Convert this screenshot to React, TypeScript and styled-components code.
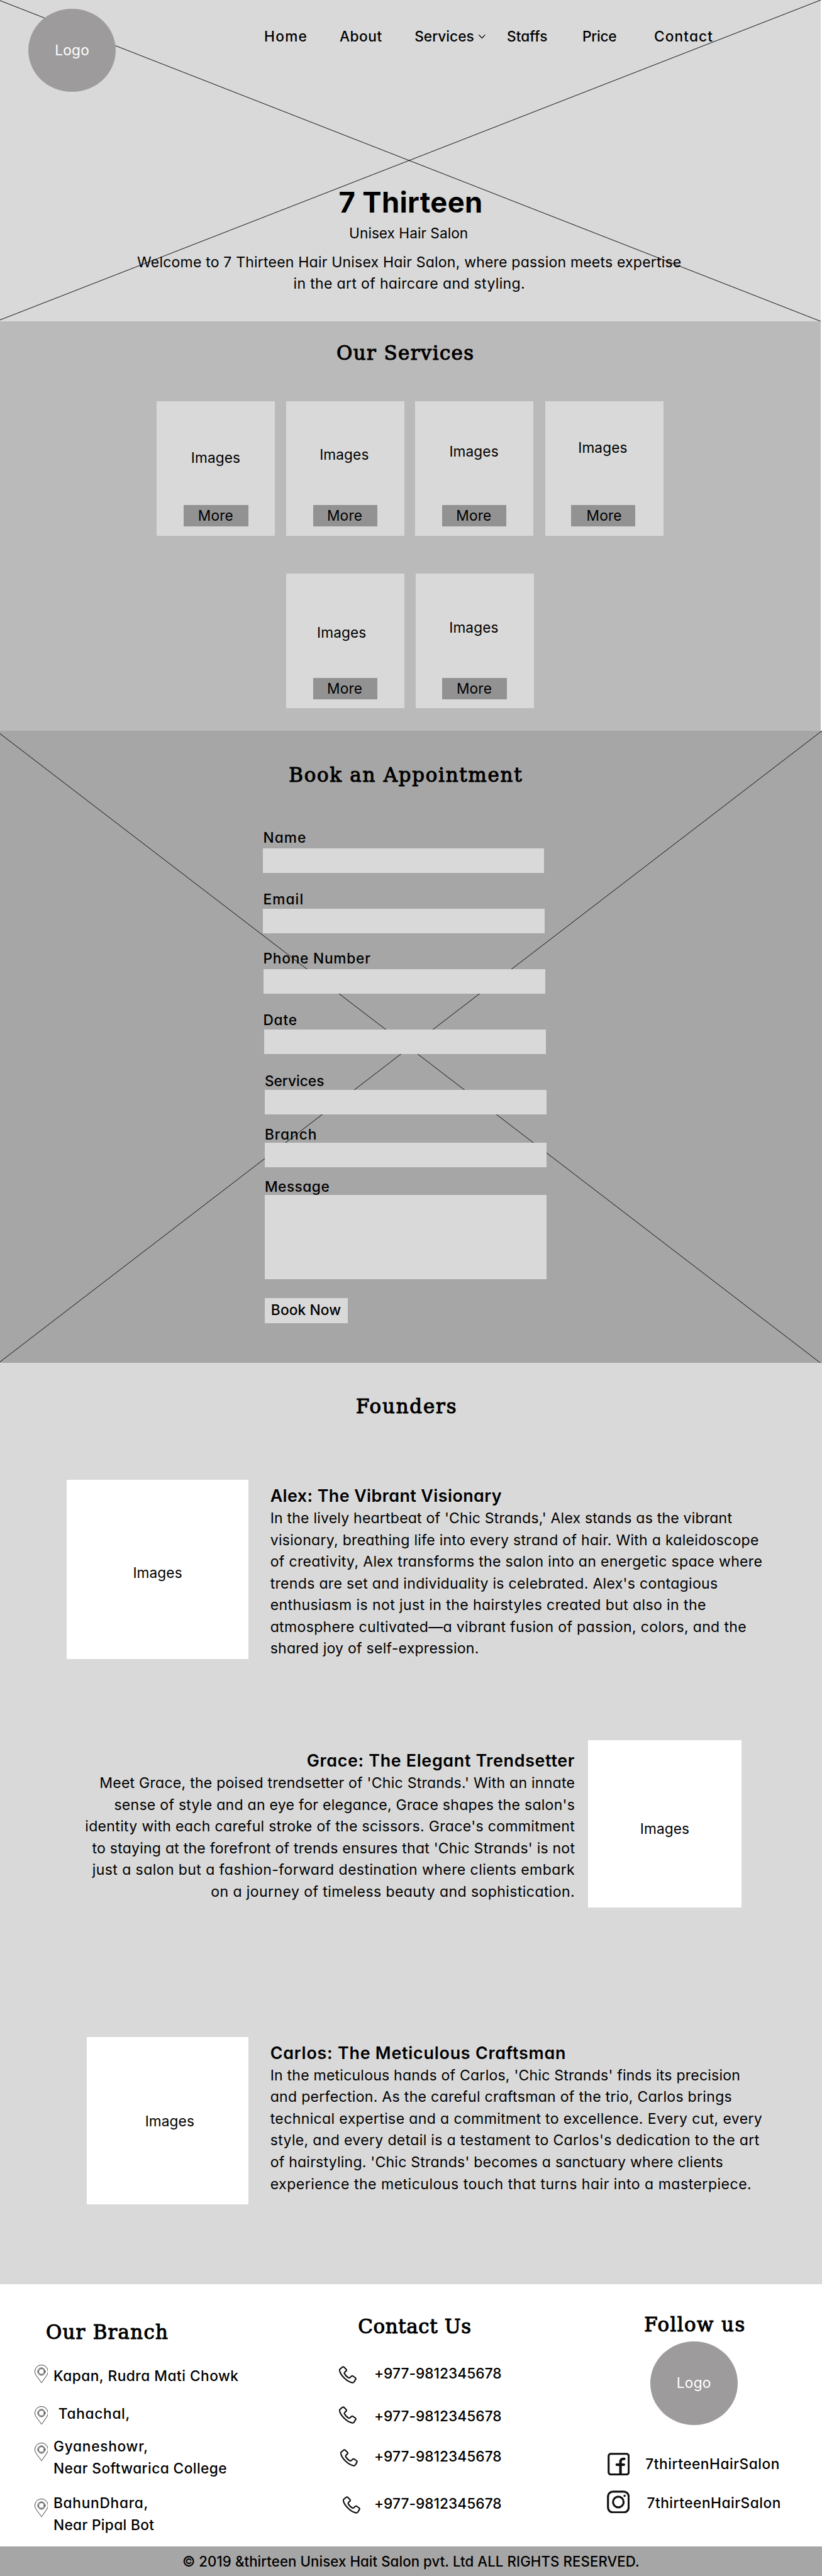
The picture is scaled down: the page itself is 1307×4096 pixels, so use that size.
import React from 'react';
import styled, { createGlobalStyle, css } from 'styled-components';

/* Sizes are written in the units of the 1440-wide design and scaled to the page width. */
const SCALE = 1307 / 1440;
const u = (n: number) => `${+(n * SCALE).toFixed(3)}px`;

const ink = '#000';
const panel = '#d9d9d9';

const GlobalStyle = createGlobalStyle`
  *, *::before, *::after { box-sizing: border-box; }
  html { background: #fff; }
  body { margin: 0; background: #fff; color: ${ink}; font-family: Inter, sans-serif; overflow-x: hidden; }
  h1, h2, h3, p { margin: 0; padding: 0; }
`;

const Page = styled.div`
  display: flex;
  flex-direction: column;
  width: ${u(1440)};
  height: 4096px;
  overflow: hidden;
`;

/* ---------- type ---------- */

const geometric = css`
  font-family: Inter, sans-serif;
  font-feature-settings: 'cv11';
  font-size: ${u(25)};
  line-height: ${u(38.05)};
  white-space: nowrap;
`;

const body = css`
  ${geometric};
  font-size: ${u(25.4)};
`;

const plain = css`
  font-family: Inter, sans-serif;
  font-size: ${u(25)};
  font-weight: 400;
  white-space: nowrap;
`;

const Line = styled.span<{ $track: number }>`
  display: block;
  letter-spacing: ${p => u(p.$track)};
`;

const Heading = styled.h2<{ $indent: number; $top: number; $track: number }>`
  height: ${u(44)};
  margin: ${p => u(p.$top)} 0 0 ${p => u(p.$indent)};
  font-family: 'DejaVu Serif', serif;
  font-weight: 400;
  font-size: ${u(34)};
  line-height: ${u(46)};
  letter-spacing: ${p => u(p.$track)};
  white-space: nowrap;
  -webkit-text-stroke: ${u(1.2)} ${ink};
`;

const ImageLabel = styled.span`
  ${plain};
  line-height: ${u(30)};
  letter-spacing: ${u(0.09)};
`;

/* ---------- crossed background ---------- */

const Cross = styled.svg`
  position: absolute;
  inset: 0;
  width: 100%;
  height: 100%;
  stroke: #111;
  stroke-width: 1.1;
  fill: none;
`;

/* ---------- hero ---------- */

const Hero = styled.header`
  position: relative;
  flex: none;
  width: ${u(1438)};
  height: ${u(563)};
  background: ${panel};
`;

const HeroContent = styled.div`
  position: relative;
  display: flex;
  flex-direction: column;
`;

const TopBar = styled.div`
  display: flex;
  align-items: flex-start;
  padding: ${u(15)} 0 0 ${u(49.6)};
`;

const Logo = styled.div`
  ${plain};
  flex: none;
  display: flex;
  justify-content: center;
  width: ${u(153.4)};
  height: ${u(146)};
  border-radius: 50%;
  background: #9e9b9c;
  color: #fff;
  line-height: ${u(146)};
  letter-spacing: ${u(0.2)};
`;

const Nav = styled.nav`
  ${geometric};
  display: grid;
  grid-template-columns: ${[132.2, 131.3, 161.7, 132.2, 125.8, 110].map(u).join(' ')};
  margin: ${u(30.3)} 0 0 ${u(259.8)};
  font-weight: 500;
`;

const NavLink = styled.a<{ $track: number }>`
  display: flex;
  align-items: center;
  gap: ${u(6.5)};
  letter-spacing: ${p => u(p.$track)};
`;

const Chevron = styled.svg`
  width: ${u(14)};
  height: ${u(9)};
  fill: none;
  stroke: ${ink};
  stroke-width: 1.5;
`;

const HeroCopy = styled.div`
  display: flex;
  flex-direction: column;
  align-items: center;
  width: ${u(1434)};
  padding-top: ${u(162.8)};
`;

const Title = styled.h1`
  height: ${u(60)};
  padding-left: ${u(5)};
  font-size: ${u(50)};
  font-weight: 700;
  line-height: ${u(62)};
  letter-spacing: ${u(0.36)};
  white-space: nowrap;
`;

const Subtitle = styled.p`
  ${plain};
  margin-top: ${u(6.8)};
  padding-right: ${u(2.5)};
  line-height: ${u(38)};
`;

const Welcome = styled.p`
  ${body};
  margin-top: ${u(11.85)};
  text-align: center;
`;

/* ---------- services ---------- */

const Services = styled.section`
  flex: none;
  display: flex;
  flex-direction: column;
  width: ${u(1438)};
  height: ${u(717)};
  background: #bababa;
`;

const CardGrid = styled.div<{ $left: number; $top: number; $cols: number[] }>`
  display: grid;
  grid-template-columns: ${p => p.$cols.map(u).join(' ')};
  margin: ${p => u(p.$top)} 0 0 ${p => u(p.$left)};
`;

const Card = styled.article<{ $foot: number }>`
  display: flex;
  flex-direction: column;
  align-items: flex-start;
  width: ${u(207)};
  height: ${u(236)};
  padding-bottom: ${p => u(p.$foot)};
  background: ${panel};
`;

const CardLabel = styled(ImageLabel)<{ $x: number; $y: number }>`
  margin: ${p => u(p.$y)} 0 0 ${p => u(p.$x)};
`;

const MoreButton = styled.button<{ $x: number; $pad: number }>`
  ${plain};
  width: ${u(113)};
  height: ${u(37)};
  margin: auto 0 0 ${p => u(p.$x)};
  padding: 0 0 0 ${p => u(p.$pad)};
  border: 0;
  background: #929292;
  color: ${ink};
  line-height: ${u(37)};
  letter-spacing: ${u(0.18)};
  text-align: left;
`;

/* ---------- appointment ---------- */

const Appointment = styled.section`
  position: relative;
  flex: none;
  width: ${u(1440)};
  height: ${u(1108)};
  background: #a6a6a6;
`;

const AppointmentContent = styled.div`
  position: relative;
  display: flex;
  flex-direction: column;
  padding-top: ${u(55.5)};
`;

const Form = styled.form`
  display: flex;
  flex-direction: column;
  padding-top: ${u(40.9)};
`;

const Field = styled.label<{ $x: number; $lead: number }>`
  display: flex;
  flex-direction: column;
  width: ${u(493)};
  margin: ${p => u(p.$lead)} 0 0 ${p => u(p.$x)};
`;

const FieldName = styled.span<{ $dx: number; $h: number; $track: number }>`
  ${geometric};
  height: ${p => u(p.$h)};
  margin-left: ${p => u(p.$dx)};
  padding-top: ${u(0.85)};
  font-weight: 500;
  letter-spacing: ${p => u(p.$track)};
`;

const box = css`
  position: relative;
  display: block;
  width: 100%;
  padding: 0;
  border: 0;
  border-radius: 0;
  outline: 0;
  background: ${panel};
`;

const Input = styled.input`
  ${box};
  height: ${u(43)};
`;

const TextArea = styled.textarea`
  ${box};
  height: ${u(147)};
  resize: none;
`;

const BookButton = styled.button`
  ${geometric};
  width: ${u(145)};
  height: ${u(44)};
  margin: ${u(33)} 0 0 ${u(464)};
  padding: 0 0 ${u(2.5)} ${u(10.7)};
  border: 0;
  background: ${panel};
  color: ${ink};
  font-weight: 500;
  line-height: ${u(41.5)};
  letter-spacing: ${u(0.15)};
  text-align: left;
`;

/* ---------- founders ---------- */

const Founders = styled.section`
  flex: none;
  display: flex;
  flex-direction: column;
  width: ${u(1440)};
  height: ${u(1614)};
  padding-top: ${u(53.3)};
  background: ${panel};
`;

const FounderRow = styled.article<{ $lead: number; $left: number }>`
  display: flex;
  align-items: flex-start;
  margin-top: ${p => u(p.$lead)};
  padding-left: ${p => u(p.$left)};
`;

const Photo = styled.div<{ $w: number; $h: number; $dx?: number; $dy: number }>`
  flex: none;
  display: flex;
  align-items: center;
  justify-content: center;
  width: ${p => u(p.$w)};
  height: ${p => u(p.$h)};
  padding: ${p => u(p.$dy * 2)} 0 0 ${p => u((p.$dx ?? 0) * 2)};
  background: #fff;
`;

const Bio = styled.div<{ $top: number; $flip?: boolean }>`
  ${body};
  flex: none;
  padding-top: ${p => u(p.$top)};
  ${p =>
    p.$flip
      ? css`width: ${u(1007.2)}; margin-right: ${u(23.2)}; text-align: right;`
      : css`margin-left: ${u(38)};`}
`;

const FounderName = styled.h3<{ $track: number }>`
  height: ${u(42.2)};
  font-size: ${u(29.6)};
  font-weight: 600;
  line-height: ${u(42)};
  letter-spacing: ${p => u(p.$track)};
`;

/* ---------- footer ---------- */

const Footer = styled.footer`
  flex: none;
  display: grid;
  grid-template-columns: ${[594, 469, 377].map(u).join(' ')};
  width: ${u(1440)};
  height: ${u(459)};
  background: #fff;
`;

const Column = styled.div`
  ${geometric};
  display: flex;
  flex-direction: column;
  font-weight: 500;
`;

const ContactRow = styled.div<{ $lead: number; $left?: number; $text: number; $h?: number }>`
  display: grid;
  grid-template-columns: ${p => u(p.$text)} auto;
  align-items: start;
  height: ${p => u(p.$h ?? 38.05)};
  margin-top: ${p => u(p.$lead)};
  padding-left: ${p => u(p.$left ?? 0)};
`;

const Icon = styled.svg<{ $w: number; $h: number; $x?: number; $y: number }>`
  display: block;
  width: ${p => u(p.$w)};
  height: ${p => u(p.$h)};
  margin: ${p => u(p.$y)} 0 0 ${p => u(p.$x ?? 0)};
  fill: none;
  stroke: #111;
  stroke-linecap: round;
  stroke-linejoin: round;
`;

const RowText = styled.div<{ $x?: number; $y?: number }>`
  padding: ${p => u((p.$y ?? 0) + 0.85)} 0 0 ${p => u(p.$x ?? 0)};
`;

const FooterLogo = styled(Logo)`
  margin: ${u(8)} 0 0 ${u(75.8)};
`;

const Copyright = styled.div`
  ${geometric};
  flex: none;
  width: ${u(1440)};
  height: ${u(52.5)};
  padding-left: ${u(319.4)};
  background: #a6a6a6;
  font-size: ${u(24.5)};
  font-weight: 500;
  line-height: ${u(52)};
  letter-spacing: ${u(0.095)};
`;

/* ---------- icons ---------- */

const PinIcon = ({ y }: { y: number }) => (
  <Icon $w={24} $h={32} $y={y} viewBox="0 0 24 32" strokeWidth={0.9}>
    <path d="M12 31.4 2.6 18.6C1.2 16.6.5 14.3.5 12A11.5 11.5 0 0 1 23.5 12C23.5 14.3 22.8 16.6 21.4 18.6Z" />
    <circle cx={12} cy={12} r={6.6} />
    <circle cx={12} cy={12} r={4.9} />
  </Icon>
);

const PhoneIcon = ({ x, y }: { x: number; y: number }) => (
  <Icon $w={31} $h={31} $x={x} $y={y} viewBox="-1 -1 93 93" strokeWidth={7}>
    <path d="M4 16 17 5Q21 2 25 5L37 17Q40 20 37 25L30 31Q26 35 28 40Q36 54 49 61Q54 63 58 59L64 53Q68 50 72 52L85 61Q89 64 87 68L79 82Q76 88 70 87Q48 84 26 62Q4 40 2 22Q1 18 4 16Z" />
  </Icon>
);

const FacebookIcon = () => (
  <Icon $w={39} $h={40} $x={1.2} $y={0} viewBox="0 0 39 40" strokeWidth={3.4}>
    <rect x={1.9} y={1.9} width={35.2} height={36.2} rx={3.8} />
    <path d="M22.7 37V16Q22.7 10.7 27.8 10.7H29.3M16.2 21H28.6" strokeWidth={4.5} />
  </Icon>
);

const InstagramIcon = () => (
  <Icon $w={40} $h={40.5} $y={0} viewBox="0 0 40 40" strokeWidth={3.5}>
    <rect x={1.9} y={1.9} width={36.2} height={36.2} rx={8.5} />
    <circle cx={20} cy={20} r={9.3} />
    <circle cx={31} cy={9.2} r={2} fill="#111" stroke="none" />
  </Icon>
);

/* ---------- content ---------- */

type Tracked = [string, number];

const navItems: Tracked[] = [
  ['Home', 1.39], ['About', 0.53], ['Services', 0], ['Staffs', 0.04], ['Price', -0.3], ['Contact', 1.2],
];

type CardSpec = { x: number; y: number; bx: number; pad: number };
const firstRow: CardSpec[] = [
  { x: 60, y: 84.2, bx: 47.3, pad: 24.7 },
  { x: 58.6, y: 78.6, bx: 46.9, pad: 24.7 },
  { x: 59.6, y: 72.5, bx: 46.9, pad: 24.7 },
  { x: 57.8, y: 66.2, bx: 45.1, pad: 27.4 },
];
const secondRow: CardSpec[] = [
  { x: 54, y: 88.1, bx: 46.9, pad: 24.7 },
  { x: 58.6, y: 79.1, bx: 46.8, pad: 24.7 },
];

const fields = [
  { name: 'Name', x: 460, lead: 27.2, dx: 1, h: 38.4, track: 1.18 },
  { name: 'Email', x: 461, lead: 27.2, dx: 0, h: 35.9, track: 1.21 },
  { name: 'Phone Number', x: 462, lead: 24.1, dx: -1, h: 38.8, track: 0.85 },
  { name: 'Date', x: 463, lead: 26.3, dx: -2, h: 36.7, track: 0.91 },
  { name: 'Services', x: 464, lead: 27.8, dx: -0.3, h: 35.2, track: 0 },
  { name: 'Branch', x: 464, lead: 15.5, dx: -0.3, h: 33.5, track: 1.07 },
  { name: 'Message', x: 464, lead: 14.7, dx: -0.3, h: 34.3, track: 0.55 },
];

const alex: Tracked[] = [
  ["In the lively heartbeat of 'Chic Strands,' Alex stands as the vibrant", 0.22],
  ['visionary, breathing life into every strand of hair. With a kaleidoscope', 0.31],
  ['of creativity, Alex transforms the salon into an energetic space where', 0.365],
  ["trends are set and individuality is celebrated. Alex's contagious", 0.335],
  ['enthusiasm is not just in the hairstyles created but also in the', 0.435],
  ['atmosphere cultivated—a vibrant fusion of passion, colors, and the', 0.365],
  ['shared joy of self-expression.', 0.275],
];
const grace: Tracked[] = [
  ["Meet Grace, the poised trendsetter of 'Chic Strands.' With an innate", 0.27],
  ["sense of style and an eye for elegance, Grace shapes the salon's", 0.29],
  ["identity with each careful stroke of the scissors. Grace's commitment", 0.35],
  ["to staying at the forefront of trends ensures that 'Chic Strands' is not", 0.245],
  ['just a salon but a fashion-forward destination where clients embark', 0.45],
  ['on a journey of timeless beauty and sophistication.', 0.45],
];
const carlos: Tracked[] = [
  ["In the meticulous hands of Carlos, 'Chic Strands' finds its precision", 0.237],
  ['and perfection. As the careful craftsman of the trio, Carlos brings', 0.322],
  ['technical expertise and a commitment to excellence. Every cut, every', 0.4],
  ["style, and every detail is a testament to Carlos's dedication to the art", 0.368],
  ["of hairstyling. 'Chic Strands' becomes a sanctuary where clients", 0.246],
  ['experience the meticulous touch that turns hair into a masterpiece.', 0.545],
];

const branches: { lead: number; h: number; pin: number; x?: number; lines: Tracked[] }[] = [
  { lead: 35.4, h: 38.05, pin: 0.6, lines: [['Kapan, Rudra Mati Chowk', 0.54]] },
  { lead: 28, h: 38.05, pin: 6.3, x: 8.7, lines: [['Tahachal,', 0.75]] },
  { lead: 20, h: 76.1, pin: 12.5, lines: [['Gyaneshowr,', 0.81], ['Near Softwarica College', 0.46]] },
  { lead: 23, h: 76.1, pin: 11.4, lines: [['BahunDhara,', 0.8], ['Near Pipal Bot', 0.36]] },
];

const phones = [
  { lead: 41.3, x: 0, y: 6.7 },
  { lead: 37.4, x: 0, y: 1.3 },
  { lead: 32.8, x: 2, y: 5.6 },
  { lead: 43.9, x: 6, y: 7 },
];

const Lines = ({ lines }: { lines: Tracked[] }) => (
  <>
    {lines.map(([text, track]) => (
      <Line key={text} $track={track}>{text}</Line>
    ))}
  </>
);

const ServiceCard = ({ spec, foot }: { spec: CardSpec; foot: number }) => (
  <Card $foot={foot}>
    <CardLabel $x={spec.x} $y={spec.y}>Images</CardLabel>
    <MoreButton type="button" $x={spec.bx} $pad={spec.pad}>More</MoreButton>
  </Card>
);

export default function App() {
  return (
    <Page>
      <GlobalStyle />

      <Hero>
        <Cross viewBox="0 0 1438 563" preserveAspectRatio="none">
          <path d="M0 1 1438 563M1438 0 0 560.5" />
        </Cross>
        <HeroContent>
          <TopBar>
            <Logo>Logo</Logo>
            <Nav>
              {navItems.map(([label, track]) => (
                <NavLink key={label} $track={track}>
                  {label}
                  {label === 'Services' && (
                    <Chevron viewBox="0 0 14 9"><path d="M1.5 1.5 7 7.3 12.5 1.5" /></Chevron>
                  )}
                </NavLink>
              ))}
            </Nav>
          </TopBar>
          <HeroCopy>
            <Title>7 Thirteen</Title>
            <Subtitle>Unisex Hair Salon</Subtitle>
            <Welcome>
              <Line $track={0.2}>Welcome to 7 Thirteen Hair Unisex Hair Salon, where passion meets expertise</Line>
              <Line $track={0.36}>in the art of haircare and styling.</Line>
            </Welcome>
          </HeroCopy>
        </HeroContent>
      </Hero>

      <Services>
        <Heading $indent={589.5} $top={33.2} $track={1.55}>Our Services</Heading>
        <CardGrid $left={274.8} $top={62.8} $cols={[226.5, 226.2, 227.5, 207]}>
          {firstRow.map((spec, i) => <ServiceCard key={i} spec={spec} foot={16.8} />)}
        </CardGrid>
        <CardGrid $left={501.4} $top={66} $cols={[226.9, 207]}>
          {secondRow.map((spec, i) => <ServiceCard key={i} spec={spec} foot={16} />)}
        </CardGrid>
      </Services>

      <Appointment>
        <Cross viewBox="0 0 1440 1108" preserveAspectRatio="none">
          <path d="M0 5 1438 1108M1440 0 0 1105.6" />
        </Cross>
        <AppointmentContent>
          <Heading $indent={506} $top={0} $track={1.93}>Book an Appointment</Heading>
          <Form>
            {fields.map(f => (
              <Field key={f.name} $x={f.x} $lead={f.lead}>
                <FieldName $dx={f.dx} $h={f.h} $track={f.track}>{f.name}</FieldName>
                {f.name === 'Message' ? <TextArea /> : <Input type="text" />}
              </Field>
            ))}
            <BookButton type="button">Book Now</BookButton>
          </Form>
        </AppointmentContent>
      </Appointment>

      <Founders>
        <Heading $indent={623.5} $top={0} $track={2.04}>Founders</Heading>
        <FounderRow $lead={107.7} $left={116.8}>
          <Photo $w={318.6} $h={314} $dy={5}><ImageLabel>Images</ImageLabel></Photo>
          <Bio $top={6}>
            <FounderName $track={0.46}>Alex: The Vibrant Visionary</FounderName>
            <Lines lines={alex} />
          </Bio>
        </FounderRow>
        <FounderRow $lead={141} $left={0}>
          <Bio $top={14.3} $flip>
            <FounderName $track={0.73}>Grace: The Elegant Trendsetter</FounderName>
            <Lines lines={grace} />
          </Bio>
          <Photo $w={268.2} $h={293} $dy={8.7}><ImageLabel>Images</ImageLabel></Photo>
        </FounderRow>
        <FounderRow $lead={227.2} $left={152.4}>
          <Photo $w={283} $h={293} $dx={3.4} $dy={0.7}><ImageLabel>Images</ImageLabel></Photo>
          <Bio $top={6.1}>
            <FounderName $track={0.85}>Carlos: The Meticulous Craftsman</FounderName>
            <Lines lines={carlos} />
          </Bio>
        </FounderRow>
      </Founders>

      <Footer>
        <Column>
          <Heading $indent={80.3} $top={61.2} $track={1.39}>Our Branch</Heading>
          {branches.map(b => (
            <ContactRow key={b.lines[0][0]} $lead={b.lead} $left={60.1} $text={33.5} $h={b.h}>
              <PinIcon y={b.pin} />
              <RowText $x={b.x}><Lines lines={b.lines} /></RowText>
            </ContactRow>
          ))}
        </Column>
        <Column>
          <Heading $indent={33.1} $top={50.9} $track={0.71}>Contact Us</Heading>
          {phones.map((p, i) => (
            <ContactRow key={i} $lead={p.lead} $text={61.5}>
              <PhoneIcon x={p.x} y={p.y} />
              <RowText><Line $track={0.04}>+977-9812345678</Line></RowText>
            </ContactRow>
          ))}
        </Column>
        <Column>
          <Heading $indent={65.6} $top={48} $track={1.56}>Follow us</Heading>
          <FooterLogo>Logo</FooterLogo>
          <ContactRow $lead={48.8} $text={67.8} $h={40}>
            <FacebookIcon />
            <RowText $y={0.8}><Line $track={0.57}>7thirteenHairSalon</Line></RowText>
          </ContactRow>
          <ContactRow $lead={25.9} $text={67.8} $h={40}>
            <InstagramIcon />
            <RowText $x={2.3} $y={2.6}><Line $track={0.57}>7thirteenHairSalon</Line></RowText>
          </ContactRow>
        </Column>
      </Footer>
      <Copyright>© 2019 &amp;thirteen Unisex Hait Salon pvt. Ltd ALL RIGHTS RESERVED.</Copyright>
    </Page>
  );
}
